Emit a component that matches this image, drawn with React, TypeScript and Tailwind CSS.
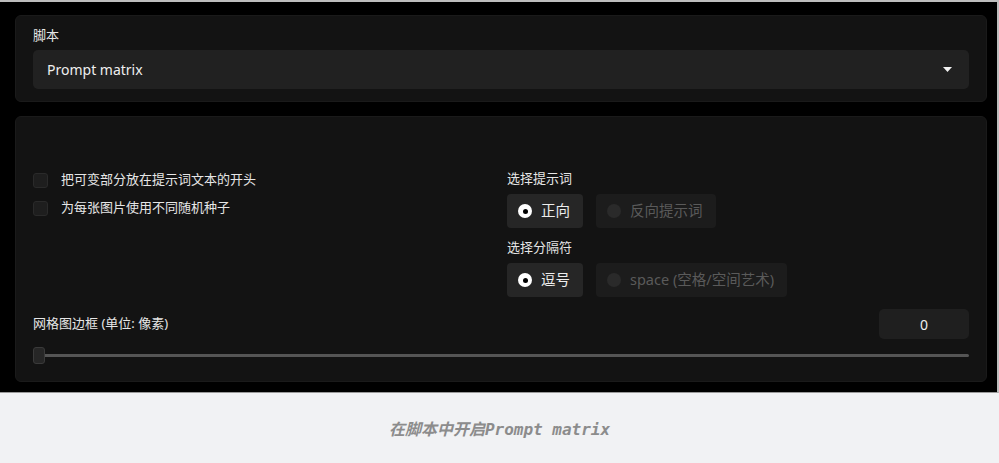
import React from 'react';

const font = { fontFamily: '"Noto Sans", "Noto Sans CJK SC", sans-serif' };

const Checkbox: React.FC<{ label: string }> = ({ label }) => (
  <label className="flex items-center gap-[13px] h-[28px]">
    <span className="w-[15px] h-[15px] rounded-[3px] bg-[#1e1e1e] border border-[#2a2a2a]" />
    <span className="text-[13px] text-[#e6e6e6]">{label}</span>
  </label>
);

const Radio: React.FC<{ label: string; checked?: boolean }> = ({ label, checked }) => (
  <div
    className={`flex items-center gap-[9px] h-[34px] pl-[11px] pr-[13px] rounded-[4px] ${
      checked ? 'bg-[#262626]' : 'bg-[#1c1c1c]'
    }`}
  >
    {checked ? (
      <span className="w-[14px] h-[14px] rounded-full bg-white flex items-center justify-center">
        <span className="w-[5px] h-[5px] rounded-full bg-black" />
      </span>
    ) : (
      <span className="w-[14px] h-[14px] rounded-full bg-[#2a2a2a]" />
    )}
    <span className={`text-[14.5px] ${checked ? 'text-[#ededed]' : 'text-[#5a5a5a]'}`}>{label}</span>
  </div>
);

export default function App() {
  return (
    <div className="w-[999px] h-[463px] flex flex-col bg-[#f1f2f4]" style={font}>
      {/* screenshot area */}
      <div className="h-[393px] bg-black border-t-2 border-r-2 border-[#bdbdbd] border-b border-b-[#9a9a9a] pl-[15px] pr-[10px] pt-[13px] flex flex-col gap-[14px]">
        {/* Script panel */}
        <div className="h-[87px] bg-[#131313] border border-[#1a1a1a] rounded-[6px] px-[17px] pt-[10px]">
          <div className="text-[13px] text-[#e6e6e6] leading-[18px]">脚本</div>
          <div className="mt-[6px] h-[39px] bg-[#212121] rounded-[5px] flex items-center justify-between pl-[14px] pr-[17px]">
            <span className="text-[14px] text-[#efefef]">Prompt matrix</span>
            <svg width="9" height="5" viewBox="0 0 9 5">
              <path d="M0 0 H9 L4.5 5 Z" fill="#f2f2f2" />
            </svg>
          </div>
        </div>

        {/* Options panel */}
        <div className="h-[266px] bg-[#131313] border border-[#1a1a1a] rounded-[6px] px-[17px] pt-[52px]">
          <div className="grid grid-cols-2 gap-3">
            <div className="-mt-[3px]">
              <Checkbox label="把可变部分放在提示词文本的开头" />
              <Checkbox label="为每张图片使用不同随机种子" />
            </div>
            <div>
              <div className="text-[13px] text-[#e6e6e6] leading-[18px]">选择提示词</div>
              <div className="flex gap-[13px] mt-[7px]">
                <Radio label="正向" checked />
                <Radio label="反向提示词" />
              </div>
              <div className="text-[13px] text-[#e6e6e6] leading-[18px] mt-[10px]">选择分隔符</div>
              <div className="flex gap-[13px] mt-[7px]">
                <Radio label="逗号" checked />
                <Radio label="space (空格/空间艺术)" />
              </div>
            </div>
          </div>

          <div className="mt-[12px] flex items-center justify-between">
            <span className="text-[13px] text-[#e6e6e6]">网格图边框 (单位: 像素)</span>
            <div className="w-[90px] h-[30px] rounded-[5px] bg-[#1f1f1f] flex items-center justify-center text-[14px] text-[#efefef]">
              0
            </div>
          </div>

          <div className="mt-[8px] h-[17px] flex items-center">
            <div className="w-[12px] h-[17px] rounded-[3px] bg-[#262626] border border-[#3a3a3a]" />
            <div className="flex-1 h-[3px] bg-[#555555] rounded-r-full" />
          </div>
        </div>
      </div>

      {/* caption */}
      <div className="flex-1 flex items-center justify-center pt-[3px]">
        <span
          className="italic font-bold text-[16px] text-[#8c8c8c]"
          style={{ fontFamily: '"DejaVu Sans Mono", "Noto Sans CJK SC", monospace' }}
        >
          在脚本中开启Prompt matrix
        </span>
      </div>
    </div>
  );
}
